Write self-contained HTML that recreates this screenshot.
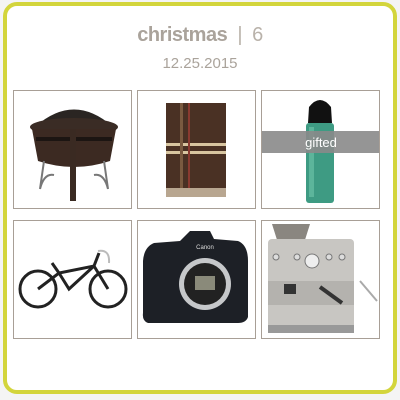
<!DOCTYPE html>
<html><head><style>
*{margin:0;padding:0;box-sizing:border-box}
body{width:400px;height:400px;background:#f4f4f4;position:relative;overflow:hidden;font-family:"Liberation Sans",sans-serif}
.card{position:absolute;left:3px;top:2px;width:394px;height:392px;border:4px solid #d3d53c;border-radius:14px;background:#fff}
.t{position:absolute;left:0;width:400px;text-align:center;color:#aaa39b}
.tile{position:absolute;width:119px;height:119px;border:1px solid #a89f96;background:#fff;overflow:hidden}
.tile svg{position:absolute;left:0;top:0}
</style></head><body>
<div class="card"></div>
<div class="t" style="top:24px;font-size:20px;font-weight:bold;letter-spacing:-0.5px">christmas <span style="font-weight:normal;color:#b9b2aa">&nbsp;|&nbsp; 6</span></div>
<div class="t" style="top:55px;font-size:15px">12.25.2015</div>

<div class="tile" style="left:13px;top:90px"><svg width="119" height="119">
<path d="M22 35 Q60 2 98 35 Z" fill="#2a2522"/>
<ellipse cx="60" cy="36" rx="44" ry="9" fill="#3a2c25"/>
<path d="M18 38 L102 38 L96 70 Q60 82 24 70 Z" fill="#3c2a22"/>
<rect x="22" y="46" width="76" height="4" fill="#1c1512"/>
<path d="M30 70 L26 98 M90 70 L94 98 M26 98 Q30 82 40 84 M94 98 Q90 82 80 84" stroke="#777" stroke-width="2" fill="none"/>
<rect x="56" y="38" width="6" height="72" fill="#3a2a22"/>
</svg></div>

<div class="tile" style="left:137px;top:90px"><svg width="119" height="119">
<rect x="28" y="12" width="60" height="85" fill="#4a3124"/>
<rect x="28" y="52" width="60" height="3" fill="#d8c5a0"/><rect x="28" y="60" width="60" height="3" fill="#d8c5a0"/>
<rect x="42" y="12" width="3" height="85" fill="#7a5a40"/><rect x="50" y="12" width="2" height="85" fill="#8a3a30"/>
<path d="M28 97 L88 97 L88 106 L28 106 Z" fill="#b8a690"/>
</svg></div>

<div class="tile" style="left:261px;top:90px"><svg width="119" height="119">
<path d="M47 16 Q58 2 69 16 L70 32 L46 32 Z" fill="#111"/>
<rect x="44" y="32" width="28" height="80" rx="3" fill="#3e9b83"/>
<rect x="47" y="36" width="5" height="70" fill="#5cb59b"/>
<rect x="0" y="40" width="119" height="22" fill="#8a8a8a" opacity="0.9"/>
<text x="59" y="56" text-anchor="middle" font-family="Liberation Sans" font-size="13" fill="#fff">gifted</text>
</svg></div>

<div class="tile" style="left:13px;top:220px"><svg width="119" height="119">
<circle cx="24" cy="68" r="18" fill="none" stroke="#222" stroke-width="3"/>
<circle cx="94" cy="68" r="18" fill="none" stroke="#222" stroke-width="3"/>
<path d="M24 68 L45 52 L80 45 L94 68 M45 52 L55 68 L80 45 M38 42 L45 52 M85 32 L80 45" stroke="#222" stroke-width="3" fill="none"/>
<path d="M84 30 Q96 28 95 42" stroke="#bbb" stroke-width="2" fill="none"/>
</svg></div>

<div class="tile" style="left:137px;top:220px"><svg width="119" height="119">
<path d="M52 10 L72 10 L76 18 L100 20 Q110 24 110 40 L110 96 Q108 102 100 102 L10 102 Q4 100 5 92 L5 40 Q6 26 16 22 L42 20 Z" fill="#1d2026"/>
<circle cx="67" cy="63" r="26" fill="#c6c8ca"/>
<circle cx="67" cy="63" r="21" fill="#222"/>
<rect x="57" y="55" width="20" height="14" fill="#8a8a7a"/>
<text x="67" y="28" text-anchor="middle" font-family="Liberation Sans" font-size="6" fill="#ddd">Canon</text>
</svg></div>

<div class="tile" style="left:261px;top:220px"><svg width="119" height="119">
<path d="M10 3 L48 3 L42 22 L16 22 Z" fill="#8a8680"/>
<rect x="6" y="18" width="86" height="90" rx="4" fill="#c8c6c2"/>
<rect x="6" y="60" width="86" height="24" fill="#b4b2ae"/>
<circle cx="50" cy="40" r="7" fill="#eee" stroke="#777"/>
<circle cx="14" cy="36" r="3" fill="#ddd" stroke="#777"/><circle cx="35" cy="36" r="3" fill="#ddd" stroke="#777"/>
<circle cx="67" cy="36" r="3" fill="#ddd" stroke="#777"/><circle cx="80" cy="36" r="3" fill="#ddd" stroke="#777"/>
<rect x="22" y="63" width="12" height="10" fill="#333"/>
<path d="M58 66 L80 82" stroke="#333" stroke-width="4"/>
<path d="M98 60 L115 80" stroke="#aaa" stroke-width="2"/>
<rect x="6" y="104" width="86" height="8" fill="#999"/>
</svg></div>
</body></html>
